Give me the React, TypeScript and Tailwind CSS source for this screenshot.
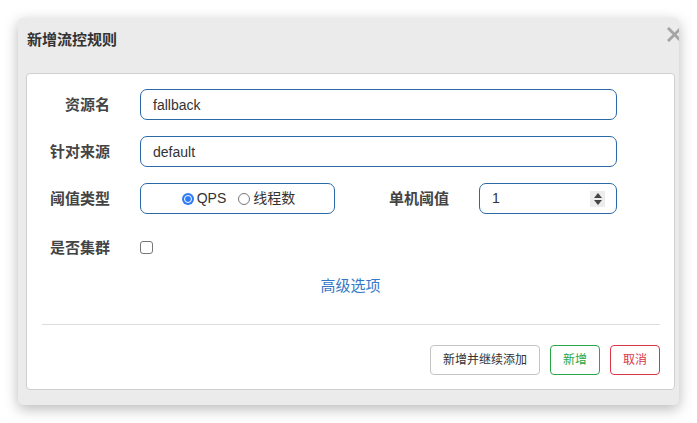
import React from "react";

const font = {
  fontFamily: '"Liberation Sans", "Noto Sans CJK SC", sans-serif',
};

function Label({ text, width }: { text: string; width: string }) {
  return (
    <div
      className={`${width} shrink-0 text-right text-[15px] font-bold leading-[31px] text-[#444]`}
    >
      {text}
    </div>
  );
}

function Radio({ checked, label }: { checked?: boolean; label: string }) {
  return (
    <label className="flex items-center gap-[3px]">
      {checked ? (
        <span className="flex size-[12px] items-center justify-center rounded-full bg-[#2f7cf6]">
          <span className="size-[8px] rounded-full border-[1.5px] border-white bg-[#2f7cf6]" />
        </span>
      ) : (
        <span className="size-[12px] rounded-full border border-[#777] bg-white" />
      )}
      <span className="text-[14px] text-[#333]">{label}</span>
    </label>
  );
}

export default function App() {
  return (
    <div className="h-[423px] w-[697px] bg-white pl-[18px] pt-[18px]" style={font}>
      <div className="relative h-[387px] w-[661px] overflow-hidden rounded-[5px] bg-[#ebebeb] shadow-[0_4px_14px_rgba(0,0,0,0.28)]">
        <div className="h-[55px] pl-[9px] pt-[13px]">
          <h4 className="text-[15px] font-bold leading-[18px] text-[#333]">
            新增流控规则
          </h4>
        </div>
        <svg
          className="absolute left-[649px] top-[9px]"
          width="15"
          height="15"
          viewBox="0 0 15 15"
        >
          <path
            d="M2 2 L13 13 M13 2 L2 13"
            stroke="#a5a5a5"
            strokeWidth="3"
            strokeLinecap="square"
          />
        </svg>

        <div className="ml-[8px] h-[317px] w-[649px] rounded-[4px] border border-[#cfcfcf] bg-white pt-[15px]">
          <div className="flex flex-col gap-[16px]">
            <div className="flex h-[31px] items-center gap-[30px]">
              <Label text="资源名" width="w-[83px]" />
              <input
                readOnly
                value="fallback"
                className="h-[31px] w-[477px] rounded-[7px] border border-[#2a68a6] px-[12px] text-[14px] text-[#333] outline-none"
              />
            </div>
            <div className="flex h-[31px] items-center gap-[30px]">
              <Label text="针对来源" width="w-[83px]" />
              <input
                readOnly
                value="default"
                className="h-[31px] w-[477px] rounded-[7px] border border-[#2a68a6] px-[12px] text-[14px] text-[#333] outline-none"
              />
            </div>
            <div className="flex h-[31px] items-center">
              <Label text="阈值类型" width="w-[83px]" />
              <div className="ml-[30px] flex h-[31px] w-[195px] items-center justify-center gap-[12px] rounded-[7px] border border-[#2a68a6] pl-[2px]">
                <Radio checked label="QPS" />
                <Radio label="线程数" />
              </div>
              <Label text="单机阈值" width="w-[114px]" />
              <div className="ml-[30px] flex h-[31px] w-[138px] items-center justify-between rounded-[7px] border border-[#2a68a6] pl-[12px] pr-[11px]">
                <span className="text-[14px] text-[#333]">1</span>
                <span className="flex h-[16px] w-[15px] flex-col items-center justify-center gap-[2px] bg-[#ececec]">
                  <svg width="8" height="5" viewBox="0 0 8 5">
                    <path d="M0 5 L4 0 L8 5 Z" fill="#444" />
                  </svg>
                  <svg width="8" height="5" viewBox="0 0 8 5">
                    <path d="M0 0 L4 5 L8 0 Z" fill="#444" />
                  </svg>
                </span>
              </div>
            </div>
          </div>

          <div className="mt-[18px] flex h-[31px] items-center gap-[30px]">
            <Label text="是否集群" width="w-[83px]" />
            <span className="size-[13px] rounded-[3px] border border-[#767676] bg-white" />
          </div>

          <div className="mt-[13px] h-[20px] text-center text-[15px] leading-[20px] text-[#3478c6]">
            高级选项
          </div>

          <div className="ml-[15px] mr-[14px] mt-[28px] h-px bg-[#dddddd]" />

          <div className="mt-[20px] flex justify-end gap-[10px] pr-[14px]">
            <button className="h-[30px] w-[110px] rounded-[4px] border border-[#c4c4c4] bg-white text-[12px] text-[#333]">
              新增并继续添加
            </button>
            <button className="h-[30px] w-[50px] rounded-[4px] border border-[#28a745] bg-white text-[12px] text-[#28a745]">
              新增
            </button>
            <button className="h-[30px] w-[50px] rounded-[4px] border border-[#dc3545] bg-white text-[12px] text-[#dc3545]">
              取消
            </button>
          </div>
        </div>
      </div>
    </div>
  );
}
